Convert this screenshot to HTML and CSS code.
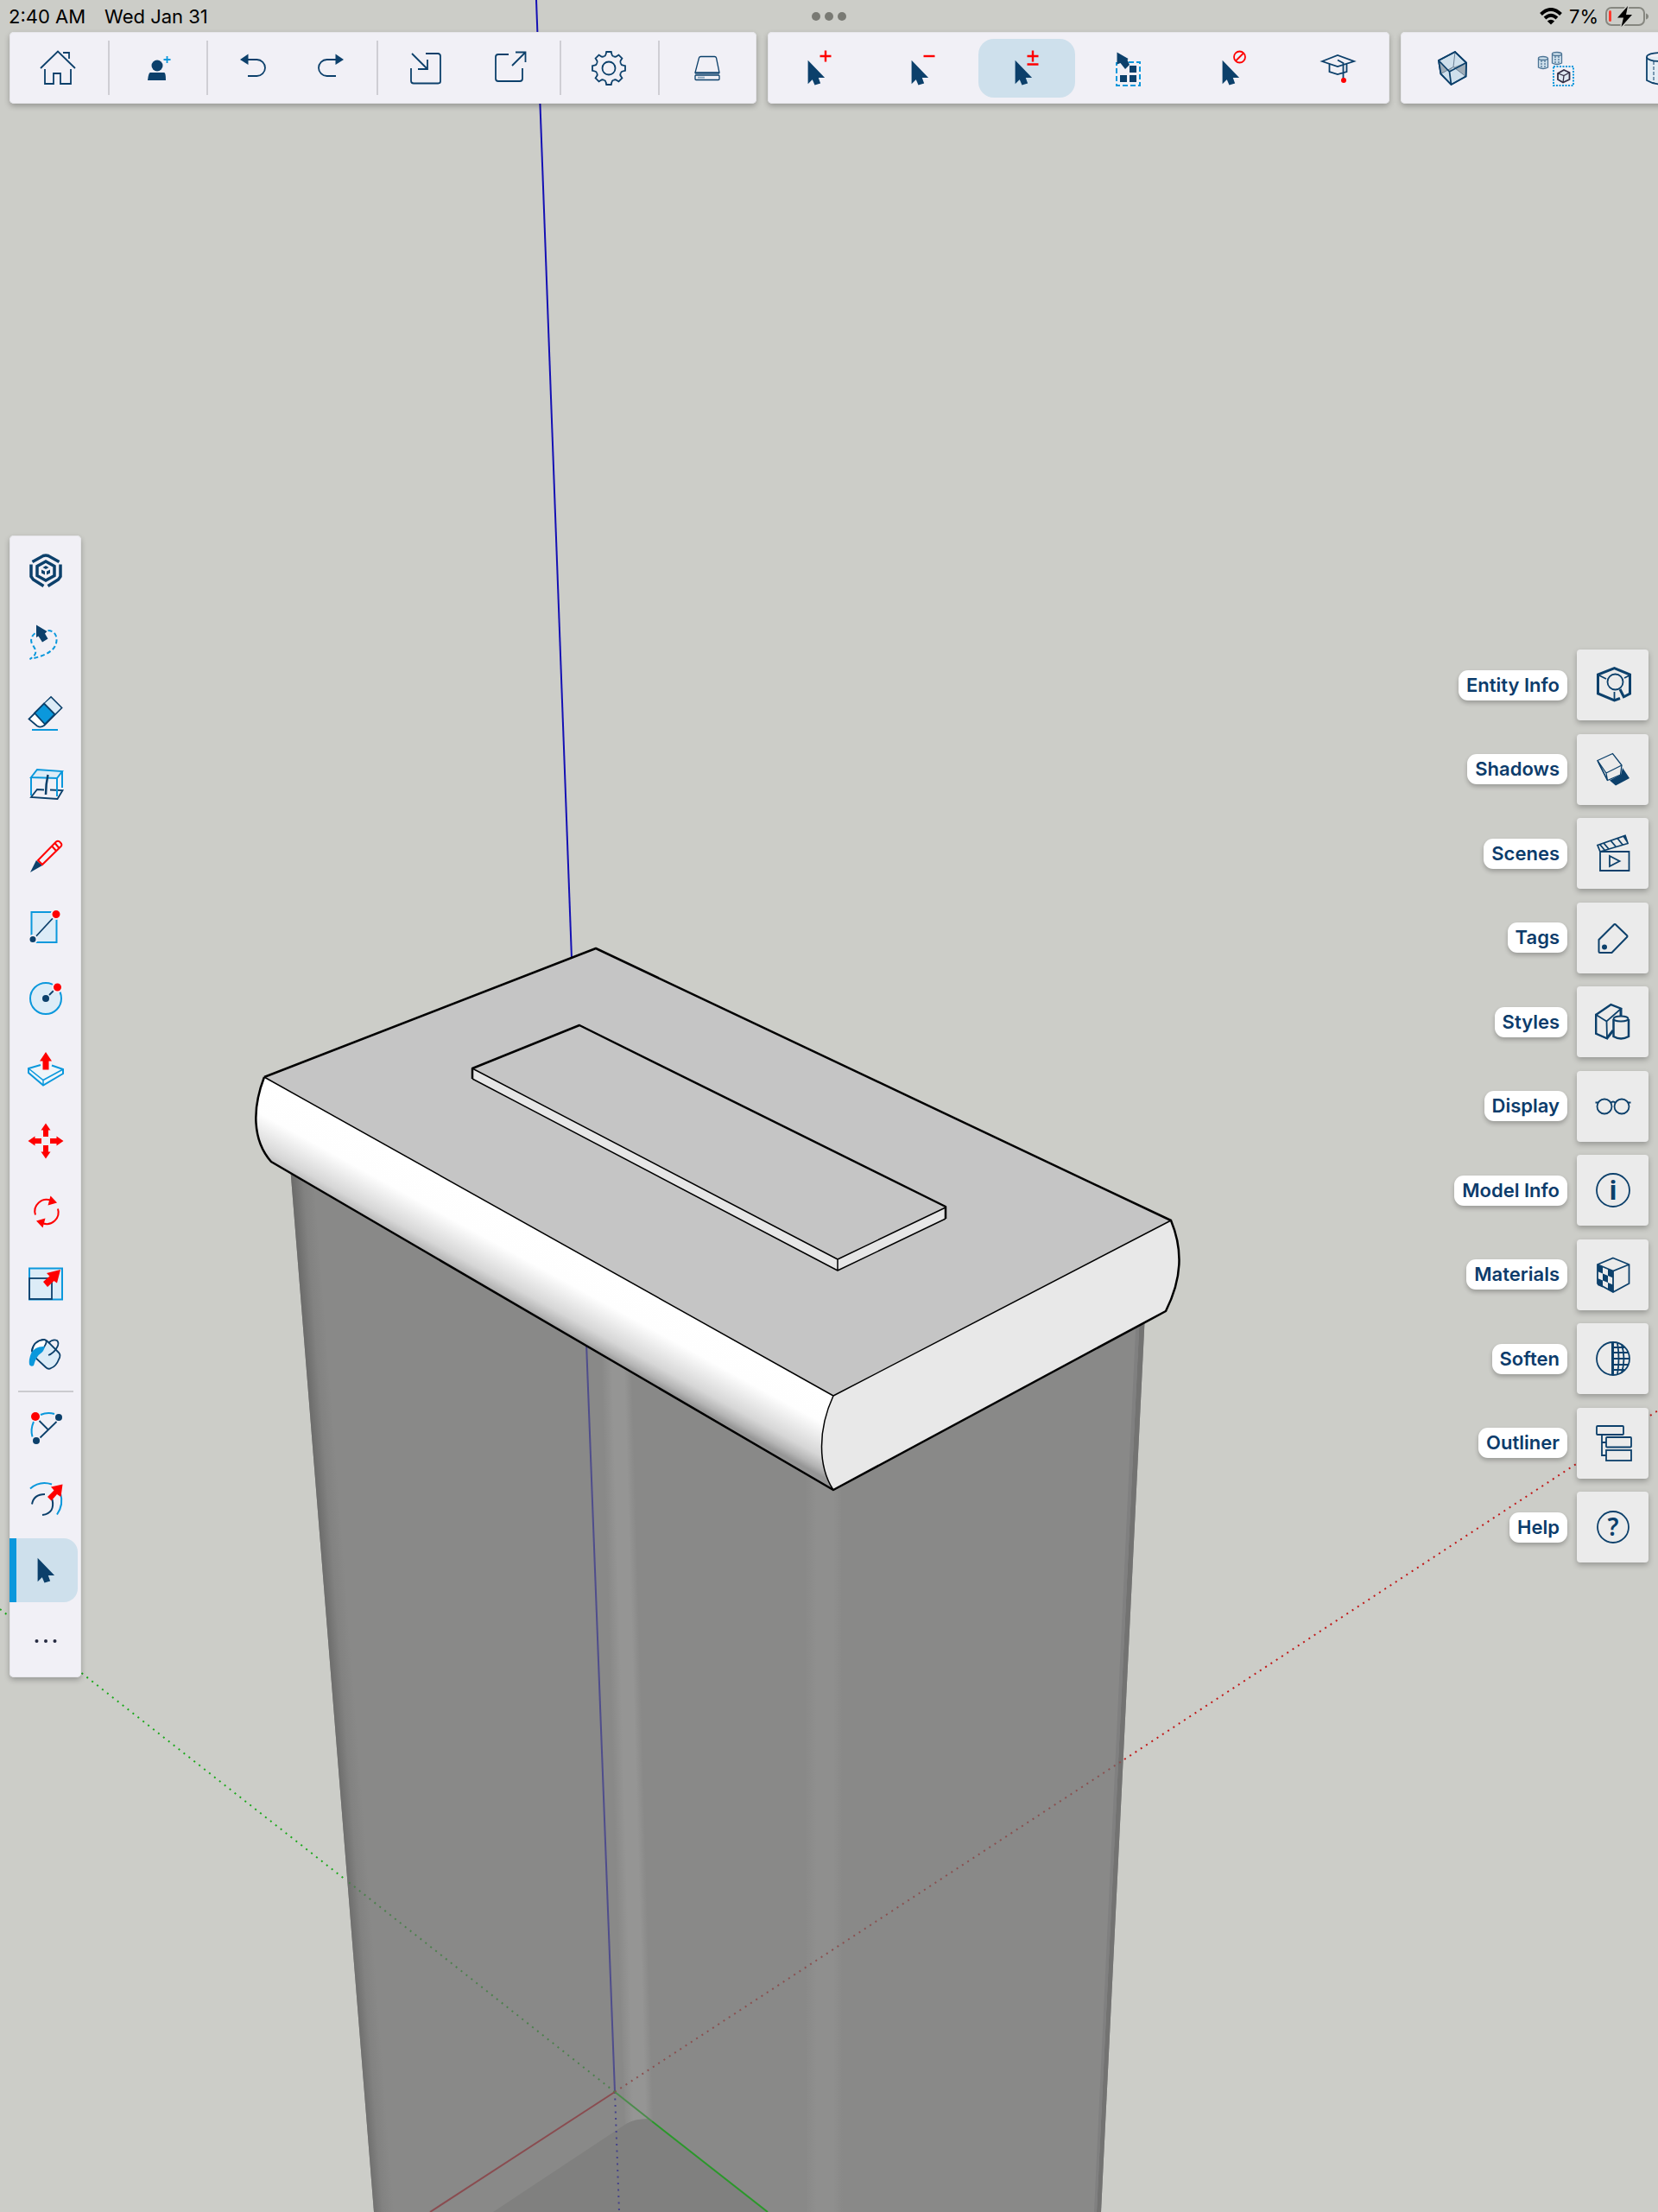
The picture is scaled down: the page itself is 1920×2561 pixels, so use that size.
FILE: index.html
```html
<!DOCTYPE html>
<html lang="en">
<head>
<meta charset="utf-8">
<title>3D Modeler</title>
<meta name="viewport" content="width=device-width, initial-scale=1">
<link rel="stylesheet" href="styles.css">
</head>
<body>
<svg class="defs" aria-hidden="true">
  <symbol id="cursor" viewBox="-24 -24 48 48"><path d="M-12.500-7V16l4.500-4.500L-5 18.500 0 17-2.500 10H4z" fill="#0c406b"/></symbol>
</svg>
<div class="app">
  <svg class="scene" viewBox="0 0 1920 2561" preserveAspectRatio="xMidYMid slice" role="img" aria-label="3D model of a box with a rounded lid">
    <defs>
      <linearGradient id="roll" gradientUnits="userSpaceOnUse" x1="635" y1="1431" x2="591" y2="1511">
        <stop offset="0" stop-color="#fff"/><stop offset=".4" stop-color="#fefefe"/><stop offset=".6" stop-color="#e9e9e9"/><stop offset=".78" stop-color="#d6d6d6"/><stop offset=".92" stop-color="#b4b4b4"/><stop offset="1" stop-color="#969696"/>
      </linearGradient>
      <linearGradient id="edgeL" gradientUnits="userSpaceOnUse" x1="384" y1="1960" x2="410" y2="1958">
        <stop offset="0" stop-color="#6c6c6b"/><stop offset=".5" stop-color="#828281"/><stop offset="1" stop-color="#898988"/>
      </linearGradient>
      <linearGradient id="band" gradientUnits="userSpaceOnUse" x1="697" y1="1600" x2="732" y2="1599">
        <stop offset="0" stop-color="#959594" stop-opacity="0"/><stop offset=".35" stop-color="#959594"/><stop offset=".75" stop-color="#959594"/><stop offset="1" stop-color="#959594" stop-opacity="0"/>
      </linearGradient>
      <linearGradient id="band2">
        <stop offset="0" stop-color="#8f8f8e" stop-opacity="0"/><stop offset=".3" stop-color="#8f8f8e"/><stop offset=".75" stop-color="#8f8f8e"/><stop offset="1" stop-color="#8f8f8e" stop-opacity="0"/>
      </linearGradient>
    </defs>
    <path d="M621 0 662 1110" stroke="#1410b4" stroke-width="2"/>
    <path d="M0 1863 401 2177" stroke="#1aa81a" stroke-width="2" stroke-dasharray="2 5.500"/>
    <path d="M1302 2037 1920 1633" stroke="#c01818" stroke-width="2" stroke-dasharray="2 5.500"/>
    <path d="M336 1350 433 2561H1275L1326 1520 965 1700z" fill="#898988"/>
    <path d="M336 1350 433 2561H459L362 1350z" fill="url(#edgeL)"/>
    <path d="M1326 1520 1275 2561H1270L1320 1520z" fill="#737372"/>
    <path d="M1320 1520 1270 2561H1267L1316 1520z" fill="#808080"/>
    <path d="M690 1550 724 2460Q738 2451 756 2456L738 1560z" fill="url(#band)"/>
    <path d="M932 1700H974L976 2561H934z" fill="url(#band2)"/>
    <path d="M571 2561 725 2459Q734 2453 751 2453L889 2561z" fill="#80807f"/>
    <g fill="none" stroke-width="2">
      <path d="M679 1555 712 2422" stroke="#4f4d8c"/>
      <path d="M712 2422 717 2561" stroke="#45438a" stroke-dasharray="2 5.500"/>
      <path d="M712 2422 401 2177" stroke="#4c804c" stroke-dasharray="2 5.500"/>
      <path d="M712 2422 1302 2037" stroke="#8a5050" stroke-dasharray="2 5.500"/>
      <path d="M712 2422 498 2561" stroke="#8a4c50"/>
      <path d="M712 2422 755 2456" stroke="#4c8c4c"/>
      <path d="M755 2456 889 2561" stroke="#2a982a"/>
    </g>
    <path d="M306 1247 690 1098 1356 1413 965 1616z" fill="#c5c5c5"/>
    <path d="M306 1247 965 1616C947 1655 947 1697 965 1725L314 1345C292 1320 292 1283 306 1247z" fill="url(#roll)"/>
    <path d="M965 1616 1356 1413C1370 1447 1369 1480 1350 1518L965 1725C947 1697 947 1655 965 1616z" fill="#e8e8e8"/>
    <path d="M547 1237 970 1458 1095 1398V1411L970 1471 547 1249z" fill="#e6e6e6"/>
    <g fill="none" stroke="#000" stroke-linejoin="round">
      <path d="M306 1247 965 1616 1356 1413M965 1616C947 1655 947 1697 965 1725" stroke-width="1.500"/>
      <path d="M306 1247 690 1098 1356 1413C1370 1447 1369 1480 1350 1518L965 1725 314 1345C292 1320 292 1283 306 1247" stroke-width="2.500"/>
      <path d="M547 1237 970 1458 1095 1398M970 1458V1471M547 1249 970 1471 1095 1411" stroke-width="1.500"/>
      <path d="M547 1249V1237L671 1187 1095 1397V1411" stroke-width="2.500"/>
    </g>
  </svg>

  <header class="top">
    <div class="status">
      <div class="status-left"><time>2:40 AM</time><span>Wed Jan 31</span></div>
      <button class="multitask" aria-label="Multitasking"><i></i><i></i><i></i></button>
      <div class="status-right">
        <svg width="26" height="20" viewBox="0 0 26 20" aria-label="Wi-Fi"><g fill="none" stroke="#000" stroke-width="4"><path d="M1.500 7.500Q13-3.500 24.500 7.500"/><path d="M6 12Q13 5.500 20 12"/></g><path d="M13 19.500 8.800 15.400Q13 12 17.200 15.400z"/></svg>
        <span>7%</span>
        <svg width="51" height="24" viewBox="0 0 51 24" aria-label="Charging"><rect x="1" y="2" width="44" height="20" rx="6" fill="none" stroke="#868780" stroke-width="2"/><path d="M47 8.500q3 1 3 3.500t-3 3.500z" fill="#868780"/><rect x="4" y="5" width="3" height="13" rx="1.500" fill="#ff3b30"/><path d="M26 0 14 13.500H21L18.500 24 31 10H24z" stroke="#cccdc8" stroke-width="3" paint-order="stroke"/></svg>
      </div>
    </div>
    <div class="bars">
      <nav class="bar" aria-label="File">
        <div class="group"><button aria-label="Home"><svg class="icon" viewBox="-24 -24 48 48"><path d="M-21 0-1-19.500 19 0M5-18H12V-11M-16 1V18H-6V6H2V18H14V1"/></svg></button></div>
        <div class="group"><button aria-label="Invite"><svg class="icon" viewBox="-24 -24 48 48"><g class="solid"><circle cy="-3" r="6.500"/><path d="M-8 5H8Q10 5 10 14H-11Q-10 5-8 5z"/></g><path class="sky" d="M7.500-10H15.500M11.500-14V-6"/></svg></button></div>
        <div class="group pair-narrow">
          <button aria-label="Undo"><svg class="icon" viewBox="-24 -24 48 48"><path class="solid" d="M-15-10-5.500-16.500V-4z"/><path d="M-6-10H4.500a9.500 9.500 0 0 1 0 19H-6"/></svg></button>
          <button aria-label="Redo"><svg class="icon" viewBox="-24 -24 48 48"><path class="solid" d="M15-10 5.500-16.500V-4z"/><path d="M6-10H-4.500a9.500 9.500 0 0 0 0 19H6"/></svg></button>
        </div>
        <div class="group pair-wide">
          <button aria-label="Import"><svg class="icon" viewBox="-24 -24 48 48"><path d="M1-17H15q3 0 3 3V15q0 2.500-2.500 2.500H-13q-3 0-3-3V0M-15-17 3 1M3-10V1H-8"/></svg></button>
          <button aria-label="Export"><svg class="icon" viewBox="-24 -24 48 48"><path d="M-3-16H-15q-3 0-3 3V12q0 3 3 3H10q3 0 3-3V0M1-3 16-18M5-18.500H16.500V-7"/></svg></button>
        </div>
        <div class="group"><button aria-label="Settings"><svg class="icon" viewBox="-24 -24 48 48"><defs><path id="tooth" d="M-5.700-13.700Q-3.600-14.300-3.300-16.500L-2.800-19H2.800L3.300-16.500Q3.600-14.300 5.700-13.700"/></defs><circle r="7.500"/><use href="#tooth"/><use href="#tooth" transform="rotate(45)"/><use href="#tooth" transform="rotate(90)"/><use href="#tooth" transform="rotate(135)"/><use href="#tooth" transform="rotate(180)"/><use href="#tooth" transform="rotate(225)"/><use href="#tooth" transform="rotate(270)"/><use href="#tooth" transform="rotate(315)"/></svg></button></div>
        <div class="group"><button aria-label="Device"><svg class="icon thin" viewBox="-24 -24 48 48"><path d="M-9.500-12q.5-1.500 2-1.500H8.500q1.500 0 2 1.500L14 5H-14z"/><path d="M-14 6H14"/><rect x="-14" y="8" width="28" height="5.500" rx="1"/><path d="M-11 10.700H-3" stroke="#8fa9c0" stroke-width="2"/></svg></button></div>
      </nav>
      <nav class="bar cells" aria-label="Selection">
        <button aria-label="Add to selection"><svg class="icon" viewBox="-24 -24 48 48"><use href="#cursor" x="-24" y="-24" width="48" height="48"/><path class="red" d="M.5-14H13.500M7-20.500V-7.500"/></svg></button>
        <button aria-label="Subtract from selection"><svg class="icon" viewBox="-24 -24 48 48"><use href="#cursor" x="-24" y="-24" width="48" height="48"/><path class="red" d="M.5-14H13.500"/></svg></button>
        <button class="active" aria-label="Toggle selection" aria-pressed="true"><svg class="icon" viewBox="-24 -24 48 48"><use href="#cursor" x="-24" y="-24" width="48" height="48"/><path class="red" d="M.5-14H13.500M7-20.500V-7.500M.5-4.500H13.500"/></svg></button>
        <button aria-label="Select all"><svg class="icon" viewBox="-24 -24 48 48"><path class="sky" stroke-width="2" stroke-dasharray="6 3" d="M-2-7H11V20H-16V-7"/><path class="solid" d="M-15.500-18.500V-4.500L-11.500-6-6 1-1-4-3.500-9.500-2.500-11zM-1-3H7V5H-1zM-12 8H-4V16H-12zM-1 8H7V16H-1z"/></svg></button>
        <button aria-label="Deselect"><svg class="icon" viewBox="-24 -24 48 48"><use href="#cursor" x="-24" y="-24" width="48" height="48"/><g class="red thinred"><circle cx="6.500" cy="-13" r="6.500"/><path d="M2-8.500 11-17.500"/></g></svg></button>
        <button aria-label="Learn"><svg class="icon" viewBox="-24 -24 48 48"><path d="M-18-8 0-15 19-8 0-2zM-9.500-4.500V4L0 7 10.500 4V-4.500M0-9.500 6.500-6V12"/><circle class="rdot" cx="7" cy="14" r="3"/></svg></button>
      </nav>
      <nav class="bar cells" aria-label="View">
        <button aria-label="Component"><svg class="icon" viewBox="-24 -24 48 48"><path fill="#cfe0ec" d="M3-19-16-9-13.500 6.500-1.500 19 15.500 9.500 16-6.500z"/><path fill="#9fadb8" stroke="none" d="M-16-9-3.500 4 1-1.500-13.500 6.500zM16-6.500 1-1.500 15.500 9.500z"/><path stroke="#6c8195" stroke-width="1" d="M3-19 1-1.500-13.500 6.500M1-1.500 15.500 9.500"/><path d="M3-19-16-9-13.500 6.500-1.500 19 15.500 9.500 16-6.500zM-16-9-3.500 4 16-6.500M-3.500 4-1.500 19"/></svg></button>
        <button aria-label="Group"><svg class="icon thin" viewBox="-24 -24 48 48"><g fill="#cfe0ec" stroke="#4d7495"><path d="M-20.500-11.500V-1Q-15 2-9.500-1V-11.500"/><ellipse cx="-15" cy="-11.500" rx="5.500" ry="2"/><path d="M-4.500-16.500V-6Q1-3 6.500-6V-16.500"/><ellipse cx="1" cy="-16.500" rx="5.500" ry="2"/><path stroke-dasharray="2 1" d="M-17-9V0M-13-9V0M-1-14V-5M3-14V-5"/></g><rect class="sky" x="-3" y="-2" width="23" height="22" stroke-width="2" stroke-dasharray="2 1.500"/><path fill="#dfe9f1" stroke="#332f45" stroke-width="1.800" d="M9 2 2 6V13L8 16.500 15.500 13V5z"/><path stroke="#332f45" d="M2 6 9 8.500 15.500 5M9 8.500 8 16.500"/></svg></button>
        <button aria-label="Cylinder"><svg class="icon" viewBox="-24 -24 48 48"><path fill="#e3edf5" d="M-15-13V14Q0 23 15 14V-13"/><ellipse cy="-13" rx="15" ry="5"/><path stroke-width="1" stroke-dasharray="4 2" d="M-7-8V18M7-8V18"/></svg></button>
      </nav>
    </div>
  </header>

  <nav class="tools" aria-label="Tools">
    <button aria-label="Home logo"><svg class="icon" viewBox="-24 -24 48 48"><path stroke-width="3.500" d="M-15.500-10.500-3-17.500Q0-18.500 3-17.500L15.500-10.500M-17-7.500V6.500L-14.500 10-2.500 17.500M17-7.500V6.500L14.500 10 2.500 17.500"/><path stroke-width="3.500" d="M0-11-10-5.500V5.500L0 11 10 5.500V-5.500z"/><path class="solid" d="M0-6 3.500-4 0-2-3.500-4zM-5-1.500-1 .5V4.500L-5 2.500zM5-1.500 1 .5V4.500L5 2.500z"/></svg></button>
    <button aria-label="Lasso"><svg class="icon" viewBox="-24 -24 48 48"><path class="sky" stroke-width="2" stroke-dasharray="5 3" d="M2.500-13C10-13 13-7 12.500-1.500 12 9 2 16-18.500 20-6 13-14 7-16.500 1-18-4-15-8-12-10"/><path class="solid" d="M-11-19.500V-5L-8.500-6.500-4 .5 2.500-3.500-1-9.500 1.500-12z"/></svg></button>
    <button aria-label="Eraser"><svg class="icon" viewBox="-24 -24 48 48"><path fill="#fff" d="M6-19 18.500-6.500-2 14Q-6 17-10 14.500L-19.500 6.500z"/><path fill="#dcecf7" stroke="none" d="M6-18 17.500-6.500 10 1-2-11z"/><path fill="#0b98dc" d="M-2-11.500 10.500 1-1 12.500-13-.5z"/><path class="sky" stroke-width="2" d="M-16 19H14"/></svg></button>
    <button aria-label="Room"><svg class="icon" viewBox="-24 -24 48 48"><path d="M-2 6.500-10 6-17 15 13.500 17 19.500 7 5 6.500"/><path class="sky" stroke-width="2" fill="#dcecf7" d="M-17-8-10-17 19-15 13-7z"/><path class="sky" stroke-width="2" d="M-17-8V13M13-7V14M19-15V4"/><path stroke-width="2.500" d="M2.500-11Q0 0 0 12"/></svg></button>
    <button aria-label="Line"><svg class="icon" viewBox="-24 -24 48 48"><path class="solid" d="M-18 19-11 5-4 11z"/><path stroke="#fe0000" stroke-width="2" d="M-9 5 12-16.500Q14.500-18.500 17-15.500 19.500-13 17.500-11L-4 10zM7-11.500 12-6M10.500-15 15.500-9"/></svg></button>
    <button aria-label="Rectangle"><svg class="icon" viewBox="-24 -24 48 48"><rect class="sky" x="-16.500" y="-17" width="29" height="35" fill="#dcecf7" stroke-width="2"/><path d="M-14 14 11-13"/><circle class="halo dot" cx="-15" cy="14.500" r="4.500"/><circle class="halo rdot" cx="12" cy="-14.500" r="5.500"/></svg></button>
    <button aria-label="Circle"><svg class="icon" viewBox="-24 -24 48 48"><circle class="sky" r="18" fill="#dcecf7" stroke-width="2"/><path d="M4-4 10-10"/><circle class="dot" r="4"/><circle class="halo rdot" cx="13.500" cy="-13" r="5.500"/></svg></button>
    <button aria-label="Push/Pull"><svg class="icon" viewBox="-24 -24 48 48"><path class="sky" stroke-width="2" fill="#eef5fa" d="M-6-5-20-1V4L-3 18.500 20 5V0L7-4.500"/><path class="sky" stroke-width="1.500" d="M-20-1-3 12.500 20 0M-3 12.500V18.500"/><path class="rdot" d="M0-20 7-9.500H3.500V.5H-3.500V-9.500H-7z"/></svg></button>
    <button aria-label="Move"><svg class="icon" viewBox="-24 -24 48 48"><defs><path id="arrow" d="M0-20.500 5.500-12.500H3V-5H-3V-12.500H-5.500z" fill="#fe0000" stroke="none"/></defs><use href="#arrow"/><use href="#arrow" transform="rotate(90)"/><use href="#arrow" transform="rotate(180)"/><use href="#arrow" transform="rotate(270)"/></svg></button>
    <button aria-label="Rotate"><svg class="icon" viewBox="-24 -24 48 48"><defs><g id="turn"><path d="M-12 3.500A13.500 13.500 0 0 1 6-13" stroke="#fe0000" stroke-width="2"/><path d="M5.500-18.500 13-10.500 2.500-7.500z" fill="#fe0000" stroke="none"/></g></defs><use href="#turn"/><use href="#turn" transform="rotate(180 1 0)"/></svg></button>
    <button aria-label="Scale"><svg class="icon" viewBox="-24 -24 48 48"><rect class="sky" x="-19" y="-17.500" width="38" height="36" fill="#dcecf7" stroke-width="2"/><rect x="-19" y="-6" width="26" height="24"/><path class="rdot" d="M17-16 1-12 4.500-8.500-3-2 2 4 9.500-3 13-.5z"/></svg></button>
    <button aria-label="Paint"><svg class="icon" viewBox="-24 -24 48 48"><path fill="#dcecf7" d="M-4-17Q0-18 3-14L15-2Q18 1 15 6 12 14 6 16 3 18 0 15L-13 3-16-4Q-15-13-4-17z"/><path fill="#fff" d="M-16-4Q-14-16-2-17 2-16 0-12-3-5-10-1z"/><path fill="#0b98dc" stroke="none" d="M-3-9Q-13-9-17-1-20 6-19 12-17 15-14 13-11 2-6-1-2-4-1-9z"/><path d="M3-13Q8-18 13-16 16-13 13-8 9-1 3 1"/></svg></button>
    <hr>
    <button aria-label="Arc"><svg class="icon" viewBox="-24 -24 48 48"><path d="M-7.500-8 3 2.500M12.500-7-6.500 11.500"/><path class="sky" stroke-width="2" d="M-6-15Q2-18.500 10-16M-14-7Q-18 2-15.500 10.500"/><circle class="rdot" cx="-12" cy="-13" r="5"/><circle class="dot" cx="15" cy="-12" r="4"/><circle class="dot" cx="-11" cy="15" r="4"/></svg></button>
    <button aria-label="Offset"><svg class="icon" viewBox="-24 -24 48 48"><path class="sky" stroke-width="2" d="M-18-11.500Q-7-21 7-16.500M17-6Q21 7 13 18.500"/><path stroke-width="2" d="M-16 6.500Q-14-5-1-5M7.500 1Q11 17-4 19"/><path class="rdot" d="M19.500-16.500 6-13.500 9.500-9.500 2-2 6.500 2.500 13-5 17.500-2z"/></svg></button>
    <button class="current" aria-label="Select" aria-pressed="true"><svg class="icon" viewBox="-24 -24 48 48"><use href="#cursor" x="-20" y="-29" width="48" height="48"/></svg></button>
    <button aria-label="More tools"><svg class="icon" viewBox="-24 -24 48 48"><g fill="#252a40" stroke="none"><circle cx="-10.500" r="2"/><circle r="2"/><circle cx="10.500" r="2"/></g></svg></button>
  </nav>

  <aside class="panels" aria-label="Panels">
    <button class="panel"><span class="label">Entity Info</span><span class="tile"><svg class="icon" viewBox="-24 -24 48 48"><path stroke-width="3" d="M13 13.500 19.500 10V-12L1.500-19.500-17.500-12V10L1.500 18 8 15.500"/><circle cx="2.500" cy="-3.500" r="9"/><path d="M-16-11-8-7M19-11 13-8M1.500 8V17"/><path stroke-width="3" d="M8 5 13 15"/></svg></span></button>
    <button class="panel"><span class="label">Shadows</span><span class="tile"><svg class="icon thin" viewBox="-24 -24 48 48"><path class="solid" d="M11-2 19 10 3 18.500-4 12.500 9 6z"/><path fill="#ebebeb" d="M-18-10.500-.5-18.500 10-5 8.500 6-6.500 12.500z"/><path d="M-18-10.500-8 4 10-5M-8 4-6.500 12.500M-18-10.500-16-6-6.500 12.500"/></svg></span></button>
    <button class="panel"><span class="label">Scenes</span><span class="tile"><svg class="icon" viewBox="-24 -24 48 48"><path d="M-18-9.500 14-20.500 17-11.500-15-2zM-15-2H18.500V20H-15zM-4 3 7.500 9-4 15zM-11-12-5-5M-3-15 3-8M5-17.500 11-10M-15-10-10-4M12-20 16-14"/></svg></span></button>
    <button class="panel"><span class="label">Tags</span><span class="tile"><svg class="icon" viewBox="-24 -24 48 48"><path stroke-width="2" d="M.5-15Q2-17 3.500-15L16-3Q17-2 16-1L-1.500 17H-15Q-16.500 17-16.500 15.500V2z"/><circle class="dot" cx="-10" cy="10.500" r="3"/></svg></span></button>
    <button class="panel"><span class="label">Styles</span><span class="tile"><svg class="icon" viewBox="-24 -24 48 48"><path stroke-width="3" d="M0 10-7 19-19.500 13.500V-8L-2.500-19.500 9-15V-6"/><path fill="#ebebeb" d="M-19.500-8-2.500-19.500 9-15-7.500-.5zM-19.500-8-7.500-.5-7 19-19.500 13.500z"/><path stroke-width="2.500" fill="#ebebeb" d="M.5-3V17Q9 22 18 17V-3"/><ellipse cx="9" cy="-3.500" rx="8.500" ry="3" fill="#ebebeb"/></svg></span></button>
    <button class="panel"><span class="label">Display</span><span class="tile"><svg class="icon" viewBox="-24 -24 48 48"><circle cx="-10" r="8.500"/><circle cx="10" r="8.500"/><path d="M-3-4Q0-7 3-4M-20.500-4.500H-17M20.500-4.500H17"/></svg></span></button>
    <button class="panel"><span class="label">Model Info</span><span class="tile"><svg class="icon" viewBox="-24 -24 48 48"><circle r="19"/><text y="11" font-size="30" font-weight="700">i</text></svg></span></button>
    <button class="panel"><span class="label">Materials</span><span class="tile"><svg class="icon" viewBox="-24 -24 48 48"><path d="M0-19.500 18.500-12V10L0 20-18 10V-12zM-18-12 0-4.500 18.500-12M0-4.500V20"/><path transform="matrix(6 2.500 0 8 -18 -12)" class="solid" d="M0 0H1V1H0zM2 0H3V1H2zM1 1H2V2H1zM0 2H1V3H0zM2 2H3V3H2z"/></svg></span></button>
    <button class="panel"><span class="label">Soften</span><span class="tile"><svg class="icon" viewBox="-24 -24 48 48"><circle r="19"/><path stroke-width="3" d="M-.5-19V19"/><path d="M5-18Q8 0 5 18M10-16Q15 0 10 16M0-13H13M0-7H17M0 0H19M0 7H17M0 13H13"/></svg></span></button>
    <button class="panel"><span class="label">Outliner</span><span class="tile"><svg class="icon" viewBox="-24 -24 48 48"><rect x="-19" y="-20" width="31" height="10" rx="1"/><rect x="-8" y="-7" width="29" height="11.500" rx="1"/><rect x="-8" y="8" width="29" height="12"/><path d="M-13-10V14H-8M-13-1H-8"/></svg></span></button>
    <button class="panel"><span class="label">Help</span><span class="tile"><svg class="icon" viewBox="-24 -24 48 48"><circle r="18"/><text y="10" font-size="28" font-weight="600">?</text></svg></span></button>
  </aside>
</div>
</body>
</html>
```
FILE: styles.css
```css
* { box-sizing: border-box; }

body {
  margin: 0;
  background: #cccdc8;
  color: #0c3c6b;
  font-family: Inter, "Liberation Sans", sans-serif;
  font-size: 22px;
}

button {
  display: flex;
  align-items: center;
  justify-content: center;
  margin: 0;
  padding: 0;
  border: 0;
  background: none;
  color: inherit;
  font: inherit;
  cursor: pointer;
}

.defs {
  display: block;
  width: 0;
  height: 0;
}

/* The drawing fills the window and the controls are stacked over it. */
.app {
  display: grid;
  grid-template-columns: minmax(0, 1fr);
  grid-template-rows: minmax(0, 1fr);
  min-height: 100vh;
  overflow: hidden;
}

.app > * { grid-area: 1 / 1; }

.scene {
  width: 100%;
  height: 100%;
  min-height: 100vh;
}

/* Icons */
.icon {
  display: block;
  flex: none;
  width: 48px;
  height: 48px;
  overflow: visible;
  fill: none;
  stroke: #0c406b;
  stroke-width: 1.8;
}

.thin { stroke-width: 1.3; }
.icon .solid, .dot { fill: #0c406b; stroke: none; }
.sky { stroke: #0b98dc; }
.red { stroke: #fe0000; stroke-width: 2.4; }
.thinred { stroke-width: 1.8; }
.rdot { fill: #fe0000; stroke: none; }
.icon .halo { stroke: #f1f0f6; stroke-width: 2; }
.icon text { fill: #0c406b; stroke: none; text-anchor: middle; font-family: "Noto Sans", sans-serif; }

/* Status line and top bars */
.top {
  align-self: start;
  color: #000;
}

.status {
  display: grid;
  grid-template-columns: 1fr auto 1fr;
  align-items: center;
  height: 37px;
  padding: 0 10px;
}

.status-left { display: flex; gap: 22px; }

.multitask { gap: 5px; }

.multitask i {
  width: 10px;
  height: 10px;
  border-radius: 50%;
  background: #797a74;
}

.status-right {
  display: flex;
  align-items: center;
  justify-content: flex-end;
  gap: 8px;
}

.bars {
  display: flex;
  gap: 13px;
  padding-left: 11px;
}

.bar, .tools {
  border-radius: 5px;
  background: #f1f0f6;
  box-shadow: 0 3px 6px rgba(0, 0, 0, .26), inset 0 0 0 1px #e6e6ea;
}

.bar {
  display: flex;
  flex: none;
  align-items: center;
  height: 83px;
}

.group {
  display: flex;
  align-items: center;
  justify-content: center;
  width: 114px;
  height: 63px;
}

.group + .group { box-shadow: inset 2px 0 #cfced4; }

.pair-narrow { width: 197px; }
.pair-narrow button { width: 90px; }
.pair-wide { width: 212px; }
.pair-wide button { width: 100px; }

.cells button {
  width: 112px;
  height: 68px;
  margin: 0 4px;
  border-radius: 18px;
}

.cells .active { background: #cee0ec; }

/* Left tool column */
.tools {
  display: flex;
  flex-direction: column;
  align-self: center;
  width: 83px;
  min-height: 1322px;
  margin-left: 11px;
}

.tools button {
  flex: 1;
  margin: 4px 0;
}

.tools hr {
  width: 64px;
  height: 2px;
  margin: 0 auto;
  border: 0;
  background: #cbcbcf;
}

.tools .current {
  margin-right: 4px;
  border-left: 8px solid #0b98dc;
  border-radius: 0 16px 16px 0;
  padding-right: 4px;
  background: #cee0ec;
}

/* Right panel column */
.panels {
  display: flex;
  flex-direction: column;
  align-items: flex-end;
  justify-content: space-between;
  align-self: center;
  justify-self: end;
  min-height: 1057px;
  margin-right: 11px;
}

.panel { gap: 11px; }

.label {
  padding: 0 9px;
  border-radius: 11px;
  background: #fff;
  box-shadow: 0 3px 5px rgba(0, 0, 0, .24);
  font-weight: 600;
  line-height: 35px;
}

.tile {
  display: flex;
  align-items: center;
  justify-content: center;
  width: 83px;
  height: 82px;
  border-radius: 4px;
  background: #ebebeb;
  box-shadow: 0 3px 6px rgba(0, 0, 0, .26);
}
```
